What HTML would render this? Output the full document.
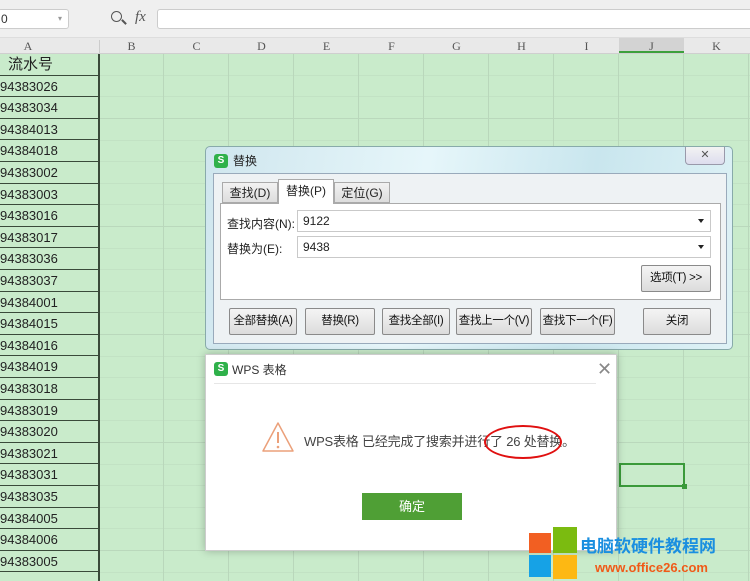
<!DOCTYPE html>
<html><head><meta charset="utf-8"><style>
*{box-sizing:border-box;margin:0;padding:0}
body{width:750px;height:581px;overflow:hidden;position:relative;background:#c9ebcb;font-family:"Liberation Sans","Noto Sans CJK SC",sans-serif;color:#222}
.abs{position:absolute}
#tb{left:0;top:0;width:750px;height:38px;background:#efefef;border-bottom:1px solid #ddd}
#hdr{left:0;top:38px;width:750px;height:16px;background:#e9e9e9;border-bottom:1px solid #cfcfcf;font-family:"Liberation Serif",serif;font-size:12px;color:#555}
#hdr span{position:absolute;top:1px;width:65px;text-align:center}
#grid{left:99px;top:54px;width:651px;height:527px;background-image:repeating-linear-gradient(90deg,transparent 0 64px,#b9d7bb 64px 65px),repeating-linear-gradient(180deg,transparent 0 21px,#bad8bc 21px 21.6px)}
#colA{left:0;top:54px;width:100px;height:527px;border-right:2px solid #3a4a3a}
.r{position:absolute;left:0;width:98px;height:21.6px;border-bottom:1.5px solid #3a4a3a;font-size:13px;line-height:22px;color:#222}
.dlg{background:#fff}
.btn{position:absolute;height:27px;border:1px solid #8a8a8a;border-radius:2px;background:linear-gradient(#f4f4f4,#dcdcdc);font-size:11.5px;text-align:center;line-height:25px;color:#111;white-space:nowrap;letter-spacing:-0.3px}
.inp{position:absolute;height:22px;background:#fff;border:1px solid #c9c9c9;font-size:12px;line-height:20px;padding-left:5px}
.inp:after{content:"";position:absolute;right:6px;top:8px;border:3.5px solid transparent;border-top:4px solid #222}
</style></head><body>
<div id="tb" class="abs">
 <div class="abs" style="left:-2px;top:9px;width:71px;height:20px;background:#fff;border:1px solid #ccc;border-radius:3px;font-size:12px;line-height:18px;padding-left:2px;color:#333">0<span style="position:absolute;right:6px;font-size:8px;color:#999">▾</span></div>
 <div class="abs" style="left:111px;top:11px;width:11px;height:11px;border:1.6px solid #555;border-radius:50%"></div>
 <div class="abs" style="left:121px;top:21px;width:6px;height:2px;background:#555;transform:rotate(45deg)"></div>
 <div class="abs" style="left:135px;top:9px;font-family:'Liberation Serif',serif;font-style:italic;font-size:15px;color:#555">fx</div>
 <div class="abs" style="left:157px;top:9px;width:600px;height:20px;background:#fff;border:1px solid #ccc;border-radius:3px"></div>
</div>
<div id="hdr" class="abs">
 <span style="left:-2px;width:60px">A</span>
 <div class="abs" style="left:99px;top:2px;width:1px;height:13px;background:#ccc"></div>
 <span style="left:99px">B</span><span style="left:164px">C</span><span style="left:229px">D</span><span style="left:294px">E</span><span style="left:359px">F</span><span style="left:424px">G</span><span style="left:489px">H</span><span style="left:554px">I</span>
 <span style="left:619px;height:15px;background:#d3d3d3;border-bottom:2px solid #3ca03c;top:0;padding-top:1px">J</span><span style="left:684px">K</span>
</div>
<div id="grid" class="abs"></div>
<div id="colA" class="abs">
<div class="r" style="top:0;padding-left:8px;font-size:15px">流水号</div>
<div class="r" style="top:21.6px">94383026</div>
<div class="r" style="top:43.2px">94383034</div>
<div class="r" style="top:64.8px">94384013</div>
<div class="r" style="top:86.4px">94384018</div>
<div class="r" style="top:108px">94383002</div>
<div class="r" style="top:129.6px">94383003</div>
<div class="r" style="top:151.2px">94383016</div>
<div class="r" style="top:172.8px">94383017</div>
<div class="r" style="top:194.4px">94383036</div>
<div class="r" style="top:216px">94383037</div>
<div class="r" style="top:237.6px">94384001</div>
<div class="r" style="top:259.2px">94384015</div>
<div class="r" style="top:280.8px">94384016</div>
<div class="r" style="top:302.4px">94384019</div>
<div class="r" style="top:324px">94383018</div>
<div class="r" style="top:345.6px">94383019</div>
<div class="r" style="top:367.2px">94383020</div>
<div class="r" style="top:388.8px">94383021</div>
<div class="r" style="top:410.4px">94383031</div>
<div class="r" style="top:432px">94383035</div>
<div class="r" style="top:453.6px">94384005</div>
<div class="r" style="top:475.2px">94384006</div>
<div class="r" style="top:496.8px">94383005</div>
</div>
<div class="abs" style="left:619px;top:463px;width:66px;height:24px;border:2px solid #3a9a3a"></div>
<div class="abs" style="left:682px;top:484px;width:5px;height:5px;background:#3a9a3a"></div>

<!-- Replace dialog -->
<div class="abs" style="left:205px;top:146px;width:528px;height:204px;border:1px solid #8aa;border-radius:5px;background:linear-gradient(100deg,#cfe6ee,#e6f6fa 40%,#c9e6ee 70%,#dff2f6)">
 <div class="abs" style="left:8px;top:7px;width:14px;height:14px;background:#2fb14a;border-radius:3px;color:#fff;font-size:10px;font-weight:bold;text-align:center;line-height:14px">S</div>
 <div class="abs" style="left:27px;top:5px;font-size:12px">替换</div>
 <div class="abs" style="left:479px;top:0;width:40px;height:18px;border:1px solid #99a;border-top:none;border-radius:0 0 4px 4px;background:linear-gradient(#f3f3f3,#dde);font-size:11px;text-align:center;color:#555;line-height:16px">✕</div>
 <div class="abs" style="left:7px;top:26px;width:514px;height:171px;border:1px solid #9ab;background:#eef2f4">
  <div class="abs" style="left:8px;top:8px;width:56px;height:21px;border:1px solid #aaa;background:linear-gradient(#f2f2f2,#ddd);font-size:12px;text-align:center;line-height:20px">查找(D)</div>
  <div class="abs" style="left:64px;top:5px;width:56px;height:25px;border:1px solid #aaa;border-bottom:none;background:#fff;font-size:12px;text-align:center;line-height:22px;z-index:2">替换(P)</div>
  <div class="abs" style="left:120px;top:8px;width:56px;height:21px;border:1px solid #aaa;background:linear-gradient(#f2f2f2,#ddd);font-size:12px;text-align:center;line-height:20px">定位(G)</div>
  <div class="abs" style="left:6px;top:29px;width:501px;height:97px;border:1px solid #aaa;background:#fff">
   <div class="abs" style="left:6px;top:11px;font-size:12px">查找内容(N):</div>
   <div class="inp" style="left:76px;top:6px;width:414px">9122</div>
   <div class="abs" style="left:6px;top:36px;font-size:12px">替换为(E):</div>
   <div class="inp" style="left:76px;top:32px;width:414px">9438</div>
   <div class="btn" style="left:420px;top:61px;width:70px">选项(T) &gt;&gt;</div>
  </div>
  <div class="btn" style="left:15px;top:134px;width:68px">全部替换(A)</div>
  <div class="btn" style="left:91px;top:134px;width:70px">替换(R)</div>
  <div class="btn" style="left:168px;top:134px;width:68px">查找全部(I)</div>
  <div class="btn" style="left:242px;top:134px;width:76px">查找上一个(V)</div>
  <div class="btn" style="left:326px;top:134px;width:75px">查找下一个(F)</div>
  <div class="btn" style="left:429px;top:134px;width:68px">关闭</div>
 </div>
</div>

<!-- WPS dialog -->
<div class="abs dlg" style="left:205px;top:354px;width:412px;height:197px;border:1px solid #ccc;box-shadow:0 0 8px rgba(0,0,0,.25)">
 <div class="abs" style="left:8px;top:7px;width:14px;height:14px;background:#2fb14a;border-radius:3px;color:#fff;font-size:10px;font-weight:bold;text-align:center;line-height:14px">S</div>
 <div class="abs" style="left:26px;top:6px;font-size:12px;color:#333">WPS 表格</div>
 <div class="abs" style="left:391px;top:4px;font-size:18px;color:#888;font-weight:300">✕</div>
 <div class="abs" style="left:8px;top:28px;width:382px;height:1px;background:#e6e6e6"></div>
 <svg class="abs" style="left:55px;top:66px" width="34" height="32"><path d="M17 2 L32 30 L2 30 Z" fill="none" stroke="#eba07a" stroke-width="1.5" stroke-linejoin="round"/><path d="M17 11v11" stroke="#eba07a" stroke-width="2"/><circle cx="17" cy="26" r="1.3" fill="#eba07a"/></svg>
 <div class="abs" style="left:98px;top:76px;font-size:13px;color:#444;white-space:nowrap;letter-spacing:-0.2px">WPS表格 已经完成了搜索并进行了 26 处替换。</div>
 <div class="abs" style="left:278px;top:70px;width:78px;height:34px;border:2px solid #e01010;border-radius:50%"></div>
 <div class="abs" style="left:156px;top:138px;width:100px;height:27px;background:#4f9f35;color:#fff;font-size:13px;text-align:center;line-height:27px">确定</div>
</div>

<!-- logo -->
<div class="abs" style="left:529px;top:533px;width:22px;height:20px;background:#f25f22"></div>
<div class="abs" style="left:553px;top:527px;width:24px;height:26px;background:#7bbb10"></div>
<div class="abs" style="left:529px;top:555px;width:22px;height:22px;background:#16a2e6"></div>
<div class="abs" style="left:553px;top:555px;width:24px;height:24px;background:#fdb813"></div>
<div class="abs" style="left:580px;top:532px;font-size:17px;font-weight:bold;color:#1a8fe0;white-space:nowrap">电脑软硬件教程网</div>
<div class="abs" style="left:595px;top:560px;font-size:13px;font-weight:bold;color:#f05a18;white-space:nowrap">www.office26.com</div>
</body></html>
